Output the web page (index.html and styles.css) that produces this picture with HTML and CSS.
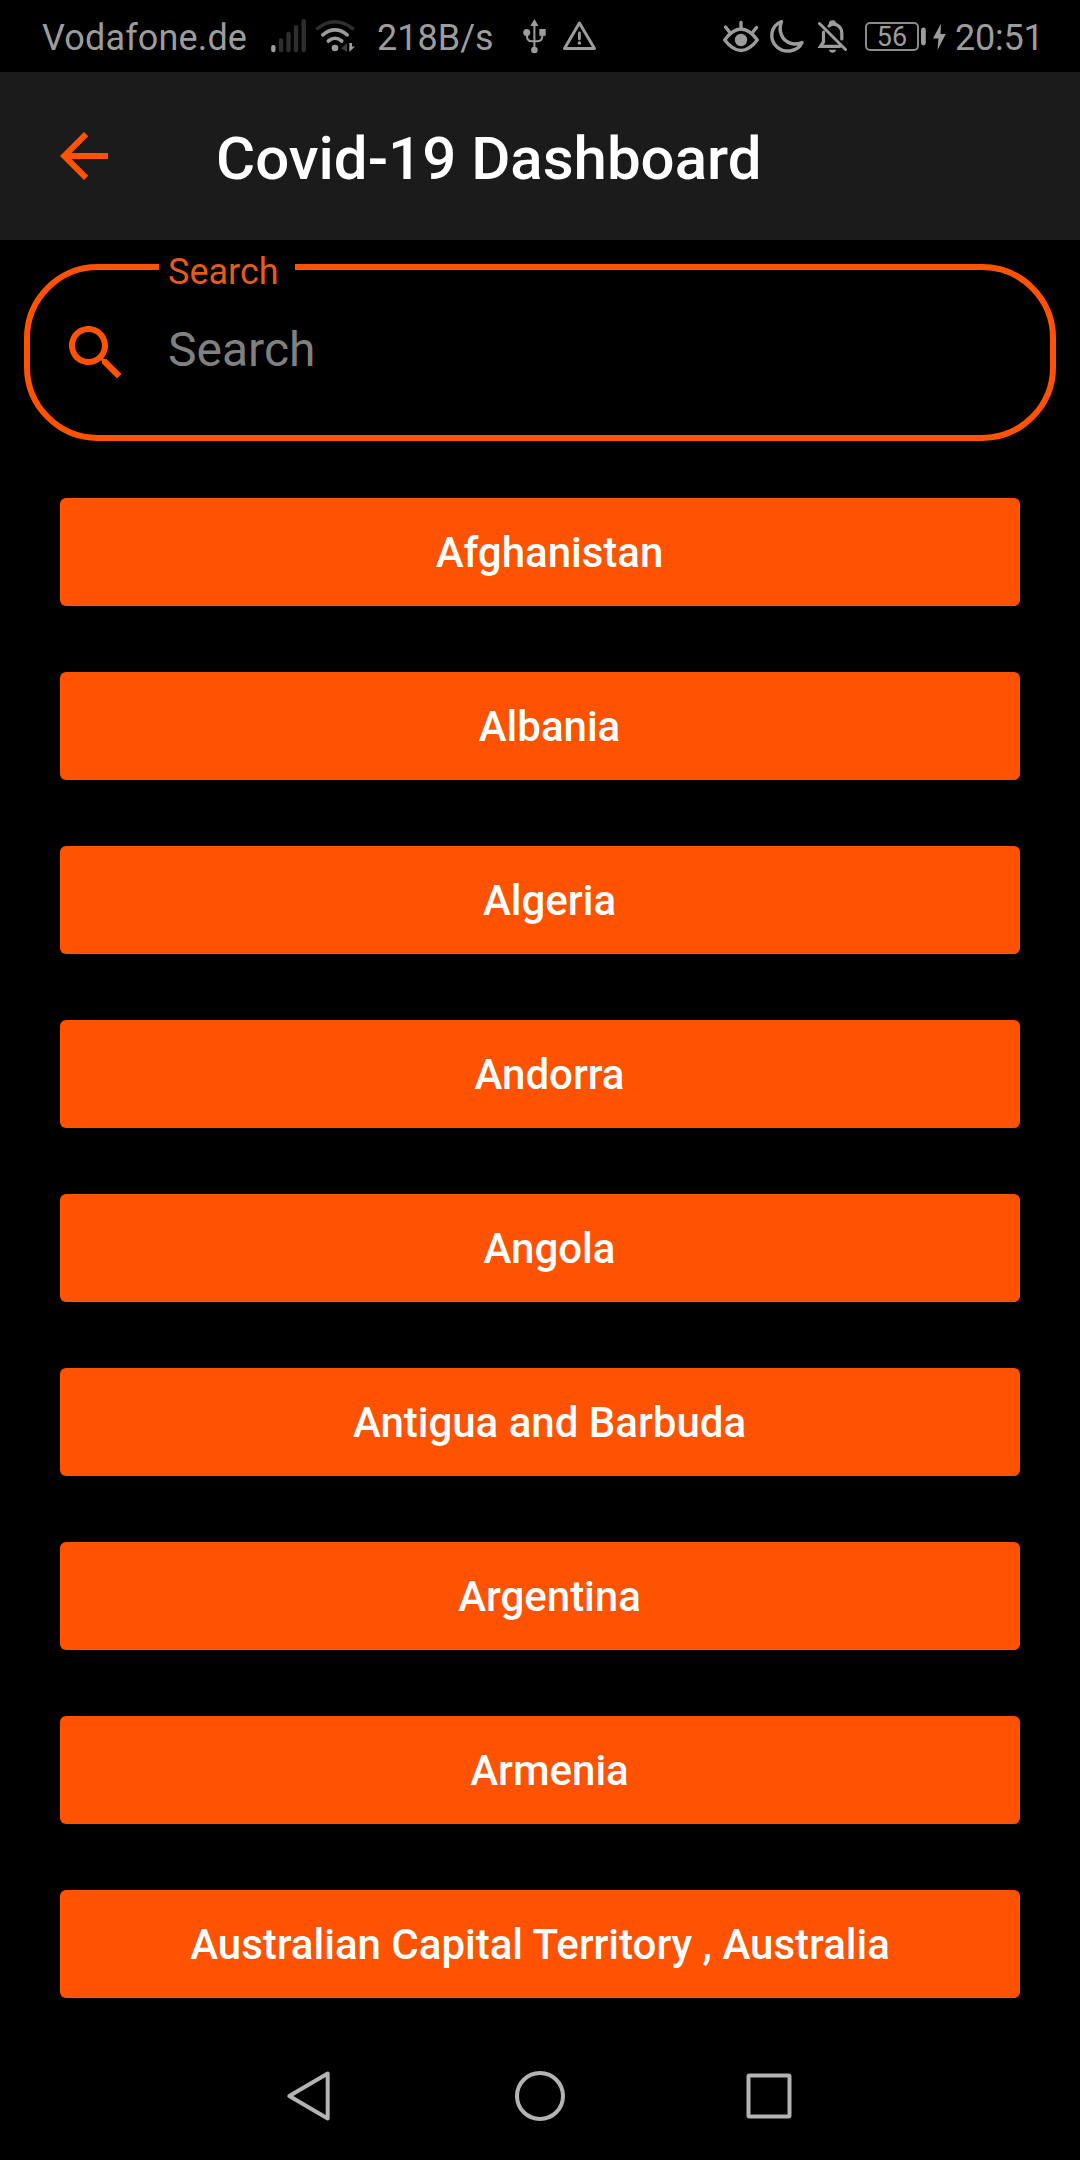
FILE: index.html
```html
<!DOCTYPE html>
<html lang="en">
<head>
<meta charset="utf-8">
<title>Covid-19 Dashboard</title>
<link rel="stylesheet" href="styles.css">
</head>
<body>
<div class="screen">
  <div class="status">
    <span class="carrier">Vodafone.de</span>
    <svg class="network" width="90" height="72" viewBox="270 0 90 72" fill="none" stroke-linecap="round">
      <g stroke="#2e2e2e" stroke-width="4.4">
        <path d="M281 40.500V50M288.500 34V50M296 27.200V50M303.700 21.200V50"/>
      </g>
      <path d="M273.300 47.300V50" stroke="#9c9c9c" stroke-width="4.400"/>
      <path d="M317.500 28.500Q335 15 352.500 28.500" stroke="#2e2e2e" stroke-width="3.600"/>
      <path d="M322.800 34.800Q335 25 347.200 34.800M328.300 41Q335 35.500 341.700 41" stroke="#9c9c9c" stroke-width="3.600"/>
      <circle cx="335" cy="48" r="3.300" fill="#9c9c9c"/>
      <path d="M347 43V52L341 48.500Z" fill="#3a3a3a"/>
      <path d="M349.300 43V52L355 46.500H352V43Z" fill="#9c9c9c"/>
    </svg>
    <span class="rate">218B/s</span>
    <svg class="notices" width="76" height="72" viewBox="522 0 76 72" fill="none" stroke="#9c9c9c">
      <path d="M534.400 24V50M527 33V36Q527 41.300 532 41.300H537Q542.300 41.300 542.300 36V33" stroke-width="2"/>
      <path d="M534.400 19L538.500 26H530.300Z" fill="#9c9c9c" stroke="none"/>
      <circle cx="526.700" cy="32.500" r="3.500" fill="#9c9c9c" stroke="none"/>
      <path d="M539.300 29H545.700V35.800H539.300Z" fill="#9c9c9c" stroke="none"/>
      <circle cx="534.400" cy="50" r="3.300" fill="#9c9c9c" stroke="none"/>
      <path d="M579.400 23L594.500 48.500H564.500Z" stroke-width="3" stroke-linejoin="round"/>
      <path d="M579.400 33V39" stroke-width="2.800" stroke-linecap="round"/>
      <circle cx="579.400" cy="43" r="1.800" fill="#9c9c9c" stroke="none"/>
    </svg>
    <svg class="modes" width="130" height="72" viewBox="722 0 130 72" fill="none" stroke="#9c9c9c" stroke-width="3.400" stroke-linecap="round">
      <path d="M724.700 40Q741 18 757.300 40Q741 61 724.700 40Z" stroke-linejoin="round"/>
      <path d="M741 22.500V29M725.500 27L729.500 32M756.500 27.500L752.500 32.500"/>
      <circle cx="741" cy="40" r="6.200" fill="#9c9c9c" stroke="none"/>
      <path d="M781.500 21.500C770 26 769 40 777 47C785 54 798 51.500 802 42.500C793 46.500 784.500 42 781.500 35C779.500 30.500 780 25.500 781.500 21.500Z" stroke-linejoin="round"/>
      <path d="M819.500 23.500L845.500 49.500" stroke-width="3"/>
      <path d="M823.500 32V42L820.500 46.300H840M829 26Q833 23 837 25Q841.800 27.500 841.800 33V39" stroke-width="3.200"/>
      <path d="M830 24.500Q829.800 21.500 832.500 21.500Q835.300 21.500 835 25" stroke-width="2.600"/>
      <path d="M829 49.800H836Q835.500 52.800 832.500 52.800Q829.500 52.800 829 49.800Z" fill="#9c9c9c" stroke="none"/>
    </svg>
    <div class="battery">56</div>
    <svg class="charge" width="30" height="72" viewBox="919 0 30 72" fill="#9c9c9c">
      <rect x="921" y="27.500" width="4.800" height="18" rx="2.400"/>
      <path d="M941 23.500L933 38.500H938.500L937.500 50L945.800 34H940.500Z"/>
    </svg>
    <span class="clock">20:51</span>
  </div>

  <header class="appbar">
    <svg width="72" height="72" viewBox="0 0 24 24" fill="#ff5202"><path d="M20 11H7.830l5.590-5.590L12 4l-8 8 8 8 1.410-1.410L7.830 13H20v-2z"/></svg>
    <h1 class="title">Covid-19 Dashboard</h1>
  </header>

  <fieldset class="search">
    <legend class="label"><span class="label-text">Search</span></legend>
    <div class="input">
      <svg class="glass" width="72" height="72" viewBox="0 0 24 24" fill="#ff5202"><path d="M15.500 14h-.79l-.28-.27C15.410 12.590 16 11.110 16 9.500 16 5.910 13.090 3 9.500 3S3 5.910 3 9.500 5.910 16 9.500 16c1.610 0 3.090-.59 4.230-1.570l.27.28v.79l5 4.990L20.490 19l-4.990-5zm-6 0C7.010 14 5 11.990 5 9.500S7.010 5 9.500 5 14 7.010 14 9.500 11.990 14 9.500 14z"/></svg>
      <span class="hint">Search</span>
    </div>
  </fieldset>

  <main class="list">
    <button class="country">Afghanistan</button>
    <button class="country">Albania</button>
    <button class="country">Algeria</button>
    <button class="country">Andorra</button>
    <button class="country">Angola</button>
    <button class="country">Antigua and Barbuda</button>
    <button class="country">Argentina</button>
    <button class="country">Armenia</button>
    <button class="country region">Australian Capital Territory , Australia</button>
  </main>

  <nav class="navbar">
    <svg width="60" height="60" viewBox="0 0 60 60"><path d="M46.700 7.500V52.500L8.300 30Z"/></svg>
    <svg width="60" height="60" viewBox="0 0 60 60"><circle cx="30" cy="30" r="23"/></svg>
    <svg width="60" height="60" viewBox="0 0 60 60"><rect x="9.500" y="9.500" width="41" height="41" rx="1"/></svg>
  </nav>
</div>
</body>
</html>
```
FILE: styles.css
```css
* {
  box-sizing: border-box;
}

body {
  margin: 0;
  background: #000;
  font-family: Roboto, sans-serif;
}

.screen {
  width: 1080px;
  height: 2160px;
  display: flex;
  flex-direction: column;
  overflow: hidden;
}

.status {
  height: 72px;
  padding-left: 42px;
  display: flex;
  align-items: center;
  color: #9c9c9c;
  font-size: 36px;
  line-height: 42px;
  white-space: nowrap;
}

.status > * {
  flex: none;
}

.carrier {
  width: 228px;
  padding-top: 3px;
  letter-spacing: 0.15px;
}

.rate {
  width: 145px;
  margin-left: 17px;
  padding-top: 3px;
}

.modes {
  margin-left: 124px;
}

.battery {
  width: 54px;
  height: 29px;
  margin: 1px 0 0 13px;
  border: 2px solid #8a8a8a;
  border-radius: 5px;
  font-size: 27px;
  line-height: 27px;
  text-align: center;
}

.clock {
  margin-left: 6px;
  padding-top: 3px;
  letter-spacing: -0.2px;
}

.appbar {
  height: 168px;
  padding-left: 48px;
  display: flex;
  align-items: center;
  gap: 96px;
  background: #1b1b1b;
}

.title {
  margin: 0;
  padding-top: 6px;
  color: #fff;
  font-size: 60px;
  font-weight: 500;
  line-height: 70px;
}

.search {
  height: 177px;
  margin: 24px 24px 0;
  padding: 0;
  border: 6px solid #ff5202;
  border-radius: 74px;
}

.label {
  width: 136px;
  height: 6px;
  margin-left: 129px;
  padding: 0 0 0 9px;
  color: #e65a1e;
  font-size: 36px;
  line-height: 42px;
}

.label-text {
  display: block;
  margin-top: -13px;
}

.input {
  display: flex;
  align-items: flex-start;
}

.glass {
  margin: 47px 0 0 30px;
}

.hint {
  margin: 52px 0 0 36px;
  color: #808080;
  font-size: 48px;
  line-height: 56px;
}

.list {
  padding: 57px 60px 0;
  display: flex;
  flex-direction: column;
  gap: 66px;
}

.country {
  height: 108px;
  padding: 2px 0 0 19px;
  border: 0;
  border-radius: 6px;
  background: #ff5202;
  color: #fff;
  font-family: inherit;
  font-size: 42px;
  font-weight: 500;
  line-height: 50px;
}

.region {
  padding-left: 0;
}

.navbar {
  margin-top: 68px;
  padding: 0 281px;
  display: flex;
  justify-content: space-between;
}

.navbar svg {
  fill: none;
  stroke: #b3b3b3;
  stroke-width: 4;
  stroke-linejoin: round;
}
```
